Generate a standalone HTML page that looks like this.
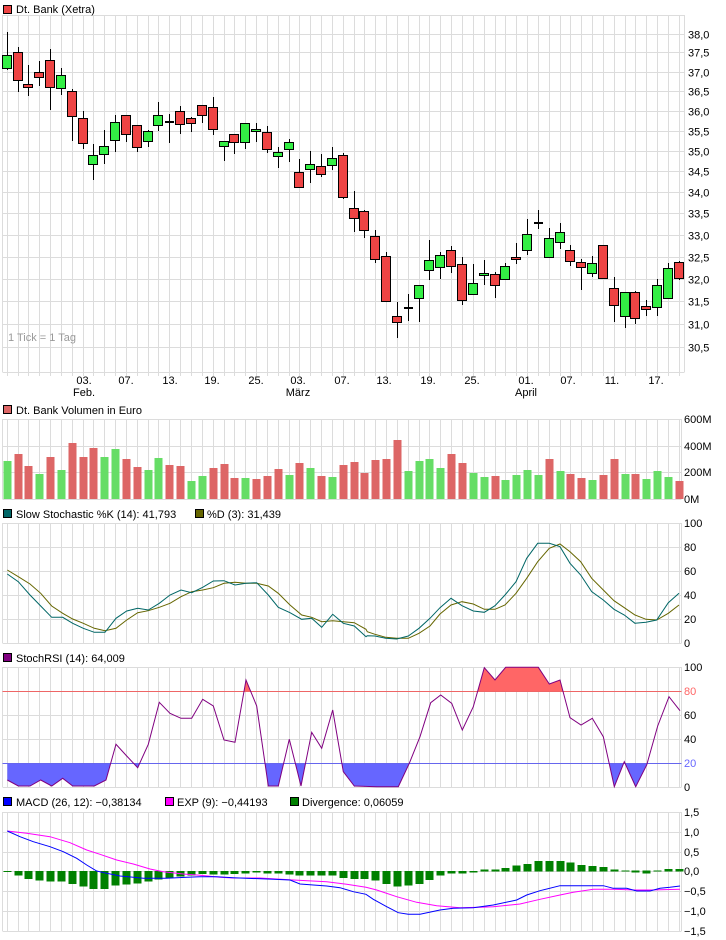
<!DOCTYPE html>
<html><head><meta charset="utf-8">
<style>
html,body{margin:0;padding:0;background:#fff;}
svg{display:block;font-family:"Liberation Sans",Arial,sans-serif;}
</style></head>
<body>
<svg id="s" width="726" height="940" viewBox="0 0 726 940" xmlns="http://www.w3.org/2000/svg" shape-rendering="crispEdges">
<defs>
<clipPath id="aboveCurve"><polygon id="acp" points=""/></clipPath>
<clipPath id="belowCurve"><polygon id="bcp" points=""/></clipPath>
</defs>
<g id="grid" stroke="#dcdcdc" stroke-width="1" fill="none"></g>
<g id="content"></g>
<g font-size="11" fill="#000">
<rect x="3.5" y="5.5" width="8" height="8" fill="#ee4444" stroke="#000"/>
<text x="16" y="13">Dt. Bank (Xetra)</text>
<text x="8" y="341" fill="#999">1 Tick = 1 Tag</text>
<rect x="3.5" y="405.5" width="8" height="8" fill="#dd6666" stroke="#000"/>
<text x="16" y="414">Dt. Bank Volumen in Euro</text>
<rect x="3.5" y="509.5" width="8" height="8" fill="#006666" stroke="#000"/>
<text x="16" y="518">Slow Stochastic %K (14): 41,793</text>
<rect x="195.5" y="509.5" width="8" height="8" fill="#666600" stroke="#000"/>
<text x="207" y="518">%D (3): 31,439</text>
<rect x="3.5" y="653.5" width="8" height="8" fill="#800080" stroke="#000"/>
<text x="16" y="662">StochRSI (14): 64,009</text>
<rect x="3.5" y="797.5" width="8" height="8" fill="#0000ff" stroke="#000"/>
<text x="16" y="806">MACD (26, 12): −0,38134</text>
<rect x="165.5" y="797.5" width="8" height="8" fill="#ff00ff" stroke="#000"/>
<text x="177" y="806">EXP (9): −0,44193</text>
<rect x="290.5" y="797.5" width="8" height="8" fill="#008000" stroke="#000"/>
<text x="302" y="806">Divergence: 0,06059</text>
</g>
<g id="labels" font-size="11" fill="#000"></g>
</svg>
<script>
var NS="http://www.w3.org/2000/svg";
function el(p,t,a,txt){var e=document.createElementNS(NS,t);for(var k in a)e.setAttribute(k,a[k]);if(txt!=null)e.textContent=txt;p.appendChild(e);return e;}
var G=document.getElementById('grid'),C=document.getElementById('content'),L=document.getElementById('labels');
function X(i){return 6.7+i*10.84;}
var N=63;
var panels=[[15,372,684],[419,499,681],[523,643,681],[667,787,681],[812,931,681]];
panels.forEach(function(p){
 for(var i=0;i<N;i++){var x=Math.round(X(i))+0.5;el(G,'line',{x1:x,y1:p[0],x2:x,y2:p[1]});}
 el(G,'line',{x1:2.5,y1:p[0],x2:2.5,y2:p[1]});
 el(G,'line',{x1:p[2]+.5,y1:p[0],x2:p[2]+.5,y2:p[1]});
 el(G,'line',{x1:2.5,y1:p[0]+.5,x2:p[2]+.5,y2:p[0]+.5});
 el(G,'line',{x1:2.5,y1:p[1]+.5,x2:p[2]+.5,y2:p[1]+.5});
});
function PY(v){return 33.5+(Math.log(38)-Math.log(v))*1428;}
for(var v=38.0;v>=30.49;v-=0.5){var y=Math.round(PY(v))+.5;el(G,'line',{x1:2.5,y1:y,x2:684.5,y2:y});
 el(L,'text',{x:688,y:y+4},v.toFixed(1).replace('.',','));}
for(var i=0;i<N;i++){var x=Math.round(X(i))+.5;el(G,'line',{x1:x,y1:372,x2:x,y2:376});}
[[84,'03.','Feb.'],[126,'07.'],[170,'13.'],[212,'19.'],[256,'25.'],[298,'03.','März'],[342,'07.'],[384,'13.'],[428,'19.'],[472,'25.'],[526,'01.','April'],[568,'07.'],[612,'11.'],[656,'17.']].forEach(function(d){
 el(L,'text',{x:d[0],y:384,'text-anchor':'middle'},d[1]);
 if(d[2])el(L,'text',{x:d[0],y:396,'text-anchor':'middle'},d[2]);
});
[[419,'600M'],[446,'400M'],[472,'200M'],[499,'0M']].forEach(function(d){el(G,'line',{x1:2.5,y1:d[0]+.5,x2:681.5,y2:d[0]+.5});el(L,'text',{x:684,y:d[0]+4},d[1]);});
for(var k=0;k<=5;k++){var y=523+k*24;el(G,'line',{x1:2.5,y1:y+.5,x2:681.5,y2:y+.5});el(L,'text',{x:684,y:y+4},String(100-k*20));}
for(var k=0;k<=5;k++){var y=667+k*24;if(k!=1&&k!=4)el(G,'line',{x1:2.5,y1:y+.5,x2:681.5,y2:y+.5});el(L,'text',{x:684,y:y+4,fill:k==1?'#ff6666':(k==4?'#6666ff':'#000')},String(100-k*20));}
['1,5','1,0','0,5','0,0','−0,5','−1,0','−1,5'].forEach(function(t,k){var y=Math.round(812+k*19.83);el(G,'line',{x1:2.5,y1:y+.5,x2:681.5,y2:y+.5});el(L,'text',{x:684,y:y+4},t);});

var cd=[[55,68,32,70,'g'],[52,80,47,92,'r'],[84,87,65,96,'r'],[72,77,61,86,'r'],[60,87,49,110,'r'],[75,88,68,95,'g'],[91,116,89,141,'r'],[118,143,111,149,'r'],[155,164,144,180,'g'],[146,154,130,164,'g'],
[122,140,115,152,'g'],[115,134,115,142,'r'],[125,147,125,152,'r'],[131,141,130,147,'g'],[115,125,102,131,'g'],[121,122,114,143,'d'],[111,124,106,134,'r'],[118,123,117,132,'r'],[105,115,105,123,'r'],[107,129,97,135,'r'],
[141,146,141,161,'g'],[134,142,134,154,'r'],[123,142,123,149,'g'],[129,131,123,142,'g'],[132,149,126,153,'r'],[152,156,147,168,'g'],[142,149,139,162,'g'],[172,187,159,187,'r'],[164,169,151,183,'g'],[166,174,154,177,'r'],
[158,165,147,170,'g'],[155,197,153,199,'r'],[208,218,191,232,'r'],[211,230,210,238,'r'],[236,259,230,263,'r'],[256,301,252,302,'r'],[316,322,302,338,'r'],[307,308,294,321,'d'],[285,298,285,322,'g'],[260,270,240,280,'g'],
[255,267,252,279,'g'],[250,266,246,273,'r'],[264,300,257,305,'r'],[283,294,264,294,'g'],[273,275,260,285,'g'],[274,285,272,298,'r'],[266,279,263,279,'g'],[257,259,243,264,'r'],[234,250,219,255,'g'],[222,223,210,229,'d'],
[238,257,228,257,'g'],[232,242,223,249,'g'],[250,261,245,266,'r'],[262,267,259,290,'r'],[263,273,256,277,'g'],[245,278,245,278,'r'],[288,305,277,322,'r'],[292,316,292,328,'g'],[292,318,291,324,'r'],[306,309,300,316,'r'],
[285,307,279,316,'g'],[268,298,263,299,'g'],[262,278,261,280,'r']];
cd.forEach(function(c,i){var x=Math.round(X(i));
 el(C,'rect',{x:x,y:c[2],width:1,height:c[3]-c[2],fill:'#000'});
 if(c[4]=='d'){el(C,'rect',{x:x-4,y:c[0],width:9,height:2,fill:'#000'});}
 else el(C,'rect',{x:x-4.5,y:c[0]+.5,width:9,height:Math.max(1,c[1]-c[0]),fill:c[4]=='g'?'#33ee44':'#ee4444',stroke:'#000','stroke-width':1});
});
var vt=[[461,'g'],[454,'r'],[466,'r'],[474,'g'],[457,'r'],[470,'g'],[443,'r'],[457,'r'],[448,'r'],[457,'g'],[449,'g'],[459,'r'],[467,'r'],[470,'g'],[458,'g'],[465,'r'],[466,'r'],[481,'g'],[476,'g'],[468,'r'],
[464,'r'],[478,'r'],[478,'g'],[479,'r'],[476,'r'],[469,'r'],[475,'g'],[463,'r'],[468,'g'],[476,'r'],[477,'g'],[465,'r'],[462,'r'],[473,'r'],[460,'r'],[459,'r'],[440,'r'],[471,'g'],[461,'g'],[459,'g'],
[468,'g'],[454,'r'],[463,'r'],[473,'g'],[477,'g'],[476,'r'],[480,'g'],[475,'g'],[470,'g'],[475,'g'],[459,'r'],[471,'g'],[474,'r'],[478,'r'],[480,'g'],[475,'r'],[459,'r'],[474,'g'],[474,'r'],[479,'g'],
[471,'g'],[477,'g'],[481,'r']];
vt.forEach(function(v,i){var x=Math.round(X(i));el(C,'rect',{x:x-3.5,y:v[0],width:8,height:499-v[0],fill:v[1]=='g'?'#66dd66':'#dd6666'});});
function pts(a,ox,oy){return a.map(function(p){return (ox+p[0]/3).toFixed(1)+','+(oy+p[1]/3).toFixed(1);}).join(' ');}
function line(s,col){el(C,'polyline',{points:s,fill:'none',stroke:col,'stroke-width':1,'shape-rendering':'auto'});}
var K1=[[22,222],[55,245],[90,285],[122,318],[155,352],[188,352],[218,370],[250,385],[283,397],[315,397],[348,355],[380,333],[413,325],[445,330],[478,310],[510,285],[543,270],[575,278],[608,262],[640,243],[672,242],[705,255],[738,250],[770,248],[805,285],[835,322],[870,338],[905,358],[935,355],[965,382],[998,343],[1030,370],[1063,378],[1098,410]];
var K2=[[22,767],[45,768],[77,775],[110,777],[145,768],[177,745],[210,715],[240,683],[273,655],[306,677],[340,693],[373,697],[405,677],[435,645],[468,605],[500,535],[533,490],[568,490],[600,500],[630,550],[662,585],[695,635],[730,660],[762,688],[793,705],[825,730],[858,727],[890,720],[925,668],[957,640]];
var D1=[[22,210],[55,230],[90,252],[122,280],[155,318],[188,340],[218,357],[250,370],[283,385],[315,392],[348,385],[380,360],[413,338],[445,332],[478,322],[510,310],[543,290],[575,275],[608,270],[640,263],[672,250],[705,247],[738,250],[770,250],[805,258],[835,280],[870,315],[905,345],[935,352],[965,365],[998,362],[1030,365],[1063,368],[1098,388]];
var D2=[[22,755],[45,763],[77,772],[110,775],[145,775],[177,760],[210,738],[240,702],[273,675],[306,665],[340,672],[373,688],[405,688],[435,675],[468,640],[500,595],[533,545],[568,505],[600,492],[630,515],[662,545],[695,595],[730,630],[762,662],[793,683],[825,705],[858,718],[890,720],[925,700],[957,675]];
line(pts(D1,0,500)+' '+pts(D2,360,380),'#666600');
line(pts(K1,0,500)+' '+pts(K2,360,380),'#006666');
var R1=[[22,840],[55,858],[90,858],[122,840],[155,858],[188,835],[218,858],[250,858],[283,858],[318,840],[348,733],[380,768],[413,803],[445,733],[478,607],[510,640],[543,655],[575,655],[608,598],[640,618],[672,720],[705,727],[738,540],[770,618],[805,858],[835,858],[868,718],[903,858],[935,697],[965,745],[998,630],[1030,815],[1063,858]];
var R2=[[50,440],[115,440],[148,370],[180,290],[212,188],[242,165],[275,190],[307,270],[340,200],[373,83],[405,120],[437,82],[535,82],[568,132],[600,120],[630,233],[663,255],[697,235],[730,290],[763,440],[793,365],[827,440],[860,375],[893,258],[927,170],[960,212]];
var rs=pts(R1,0,500)+' '+pts(R2,360,640);
document.getElementById('acp').setAttribute('points','7.3,600 '+rs+' 680,720 680,600');
document.getElementById('bcp').setAttribute('points','7.3,800 '+rs+' 680,720 680,800');
el(C,'rect',{x:7,y:763,width:674,height:24,fill:'#6666ff','clip-path':'url(#aboveCurve)'});
el(C,'rect',{x:7,y:667,width:674,height:24,fill:'#ff6666','clip-path':'url(#belowCurve)'});
el(C,'line',{x1:2.5,y1:691.5,x2:681.5,y2:691.5,stroke:'#ee6666'});
el(C,'line',{x1:2.5,y1:763.5,x2:681.5,y2:763.5,stroke:'#6666ee'});
line(rs,'#800080');
var H=[[243,245],[243,257],[243,267],[243,272],[243,275],[243,275],[243,282],[243,290],[243,297],[243,297],[243,287],[243,284],[243,281],[243,275],[243,268],[243,264],[243,260],[243,256],[243,252],[243,254],[243,254],[243,252],[243,250],[243,248],[243,251],[243,251],[243,253],[243,256],[243,256],[243,256],[243,257],[243,264],[243,267]];
H.forEach(function(h,i){var x=Math.round(X(i));var y1=790+h[0]/3,y2=790+h[1]/3;el(C,'rect',{x:x-3.5,y:y1,width:8,height:Math.max(1,y2-y1),fill:'#008000'});});
var H2=[[693,717],[693,722],[693,732],[693,740],[693,737],[693,732],[693,720],[693,707],[693,701],[693,700],[693,698],[689,695],[689,695],[684,695],[677,695],[672,695],[663,695],[663,695],[663,695],[668,695],[675,695],[678,695],[681,695],[689,695],[692,695],[692,698],[692,700],[692,695],[687,695],[687,695]];
H2.forEach(function(h,i){var x=Math.round(X(i+33));var y1=640+h[0]/3,y2=640+h[1]/3;el(C,'rect',{x:x-3.5,y:y1,width:8,height:Math.max(1,y2-y1),fill:'#008000'});});
var M1=[[22,123],[60,140],[100,155],[150,170],[190,185],[230,205],[260,225],[290,243],[320,250],[360,258],[400,262],[430,265],[500,265],[560,262],[600,260],[650,260],[700,263],[820,268],[870,270],[900,282],[940,285],[980,288],[1020,293],[1060,305],[1098,313]];
var M2=[[40,778],[80,800],[115,818],[145,823],[180,823],[240,810],[280,805],[340,803],[400,795],[470,780],[500,765],[540,752],[600,737],[730,737],[760,745],[800,745],[830,753],[870,753],[900,745],[930,742],[960,738]];
var E1=[[22,123],[80,130],[150,140],[210,158],[260,180],[300,193],[350,210],[400,222],[450,237],[490,245],[550,252],[600,256],[660,262],[700,264],[780,264],[830,267],[880,270],[980,275],[1040,283],[1098,292]];
var E2=[[50,750],[110,770],[170,787],[230,797],[300,803],[360,802],[400,800],[480,792],[540,778],[600,765],[640,757],[700,748],[760,748],[830,750],[870,750],[960,748]];
line(pts(E1,0,790)+' '+pts(E2,360,640),'#ff00ff');
line(pts(M1,0,790)+' '+pts(M2,360,640),'#0000ff');
</script>
</body></html>
